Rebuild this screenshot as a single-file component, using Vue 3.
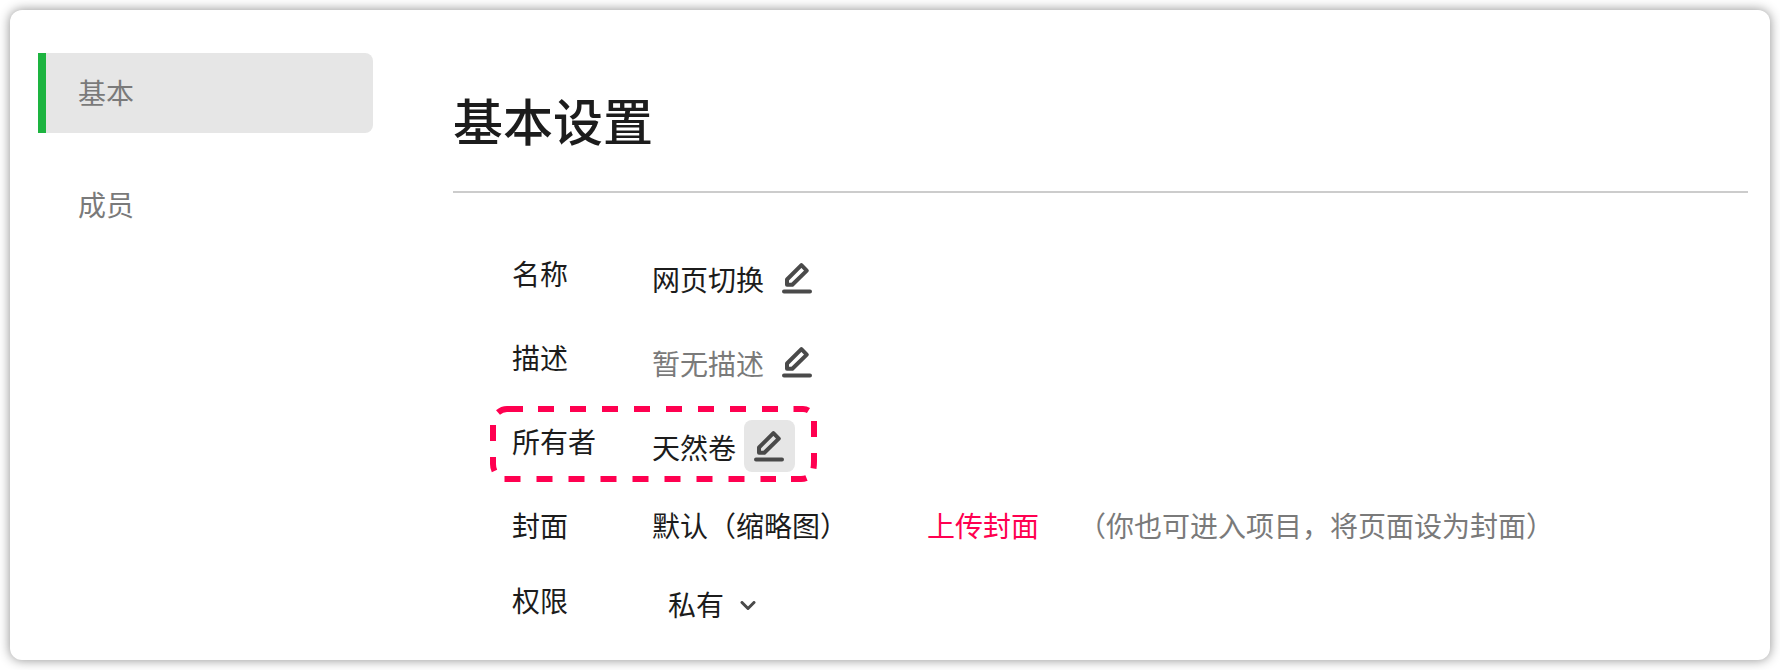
<script setup>
import { ref } from 'vue'

const tabs = ['基本', '成员']
const active = ref('基本')
const access = ref('私有')
const fields = [
  { label: '名称', value: '网页切换' },
  { label: '描述', value: '暂无描述', muted: true },
  { label: '所有者', value: '天然卷', marked: true },
]
</script>

<template>
  <div class="card">
    <nav class="side">
      <a
        v-for="tab in tabs"
        :key="tab"
        href="#"
        class="tab"
        :class="{ active: tab === active }"
        @click.prevent="active = tab"
      >{{ tab }}</a>
    </nav>

    <main class="content">
      <h1>基本设置</h1>

      <div class="rows">
        <div v-for="f in fields" :key="f.label" class="row">
          <span class="label">{{ f.label }}</span>
          <div class="value editable">
            <span class="text" :class="{ muted: f.muted }">{{ f.value }}</span>
            <button type="button" class="edit" :class="{ hovered: f.marked }" :aria-label="'编辑' + f.label">
              <svg width="30" height="32" viewBox="0 0 30 32" fill="none" stroke="currentColor">
                <path d="M5 17.5 19.4 3.2 24.8 8.6 10.3 22.8H5Z" stroke-width="4" stroke-linejoin="round" />
                <path d="M2 29.5H28" stroke-width="4" stroke-linecap="round" />
              </svg>
            </button>
          </div>
          <svg v-if="f.marked" class="marker" width="328" height="76" viewBox="490 406 328 76" fill="none" stroke="#ff0050" stroke-width="6" aria-hidden="true">
            <path d="M498 412.500Q502 409 507 409H523M793.500 409H803Q806 409 808.500 410.500" />
            <path d="M538 409H778" stroke-dasharray="16 16" />
            <path d="M814 421V437M814 453V461Q814 465 813.500 468.500" />
            <path d="M806.500 478Q804 479 801 479H791" />
            <path d="M504.500 479H776" stroke-dasharray="16 16" />
            <path d="M493 425V441M493 457V464Q493 468 494.500 471" />
          </svg>
        </div>

        <div class="row cover">
          <span class="label">封面</span>
          <div class="value">
            <span>默认（缩略图）</span>
            <a href="#" class="upload" @click.prevent>上传封面</a>
            <span class="muted">（你也可进入项目，将页面设为封面）</span>
          </div>
        </div>

        <div class="row">
          <label class="label" for="access">权限</label>
          <div class="picker">
            <select id="access" v-model="access">
              <option>私有</option>
              <option>公开</option>
            </select>
            <svg width="16" height="10" viewBox="0 0 16 10" fill="none" stroke="#4a4a4a" stroke-width="3" stroke-linecap="round" stroke-linejoin="round" aria-hidden="true">
              <path d="M2 1.500 8 7.500 14 1.500" />
            </svg>
          </div>
        </div>
      </div>
    </main>
  </div>
</template>

<style>
body {
  background: #fff;
}
</style>

<style scoped>
.card {
  box-sizing: border-box;
  display: flex;
  gap: 80px;
  min-height: calc(100vh - 20px);
  margin: 10px;
  padding: 43px 22px 28px 28px;
  border-radius: 12px;
  background: #fff;
  box-shadow: 0 0 12px rgba(0, 0, 0, 0.45);
  color: #1c1c1c;
  font-family: "Noto Sans CJK SC", sans-serif;
  font-size: 28px;
  line-height: 40px;
}

.side {
  display: flex;
  flex: 0 0 335px;
  flex-direction: column;
  gap: 32px;
}

.tab {
  padding: 19px 32px 21px;
  border-left: 8px solid transparent;
  border-radius: 0 8px 8px 0;
  color: #7a7a7a;
  text-decoration: none;
}

.tab.active {
  border-left-color: #1db440;
  background: #e6e6e6;
}

.content {
  flex: 1;
  min-width: 0;
  padding-top: 30px;
}

h1 {
  margin: 0 0 59px;
  padding-bottom: 36px;
  border-bottom: 2px solid #ccc;
  font-size: 50px;
  font-weight: 500;
  line-height: 72px;
}

.rows {
  display: flex;
  flex-direction: column;
  gap: 32px;
  padding-left: 59px;
  line-height: 42px;
}

.row {
  position: relative;
  display: flex;
  align-items: flex-start;
}

.cover {
  min-height: 43px;
}

.label {
  flex: 0 0 140px;
}

.value {
  display: flex;
  flex-wrap: wrap;
}

.editable {
  align-items: center;
  gap: 8px;
}

.text {
  padding-top: 2px;
}

.muted {
  color: #7a7a7a;
}

.edit {
  display: grid;
  place-items: center start;
  width: 51px;
  height: 52px;
  padding: 0 0 0 10px;
  border: 0;
  border-radius: 8px;
  background: transparent;
  color: #4a4a4a;
}

.edit.hovered {
  background: #e6e6e6;
}

.marker {
  position: absolute;
  top: -14px;
  left: -22px;
  pointer-events: none;
}

.upload {
  margin: 0 39px 0 79px;
  color: #ff0050;
  text-decoration: none;
}

.picker {
  display: grid;
  align-items: center;
}

.picker select,
.picker svg {
  grid-area: 1 / 1;
}

.picker select {
  height: 50px;
  padding: 0 48px 0 16px;
  border: 0;
  background: transparent;
  color: inherit;
  font: inherit;
  appearance: none;
}

.picker svg {
  justify-self: end;
  margin: 4px 17px 0 0;
  pointer-events: none;
}
</style>
